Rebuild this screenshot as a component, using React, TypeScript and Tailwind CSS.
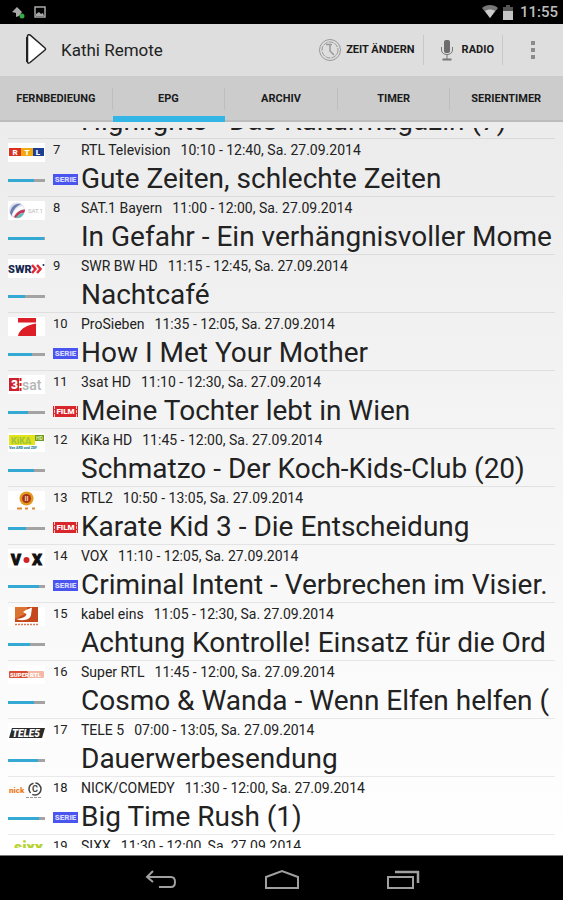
import type { ReactNode } from "react"
import { useState } from "react"

type Kind = "serie" | "film"

interface Programme {
  channel: number
  station: string
  time: string
  title: string
  progress: number
  kind?: Kind
  logo: ReactNode
}

const DATE = "Sa. 27.09.2014"

const tabs = ["FERNBEDIEUNG", "EPG", "ARCHIV", "TIMER", "SERIENTIMER"]

const programmes: Programme[] = [
  {
    channel: 6,
    station: "ZDFkultur",
    time: "11:00 - 12:00",
    title: "Highlights - Das Kulturmagazin (7)",
    progress: 80,
    logo: null,
  },
  {
    channel: 7,
    station: "RTL Television",
    time: "10:10 - 12:40",
    title: "Gute Zeiten, schlechte Zeiten",
    progress: 70,
    kind: "serie",
    logo: (
      <>
        <rect x="1" y="5" width="12" height="8" fill="#d9301f" />
        <rect x="13" y="5" width="12" height="8" fill="#f2a912" />
        <rect x="25" y="5" width="11" height="8" fill="#1b3f95" />
        <g fill="#fff" fontSize="8" fontWeight="900" textAnchor="middle">
          <text x="7" y="12">R</text>
          <text x="19" y="12">T</text>
          <text x="30" y="12">L</text>
        </g>
      </>
    ),
  },
  {
    channel: 8,
    station: "SAT.1 Bayern",
    time: "11:00 - 12:00",
    title: "In Gefahr - Ein verhängnisvoller Mome",
    progress: 96,
    logo: (
      <>
        <circle cx="9" cy="9.500" r="8" fill="#dcdfe8" />
        <path d="M2 12C3 6 7 2 13 3C9 5 5 8 4 15Z" fill="#6b7fb5" />
        <path d="M4 14C6 9 10 5 15 5L16 8C11 9 8 12 7 16Z" fill="#fbfbfd" />
        <path d="M6 16C8 12 11 9 17 8.500C17 11 16 12 15 12C12 12 10 14 8 17Z" fill="#c4385a" />
        <path d="M8 17C10 14 12 12.500 16 12C15 15 12 17.500 8 17Z" fill="#5cbdb6" />
        <text x="20" y="12" fill="#b9b9b9" fontSize="6">SAT.1</text>
      </>
    ),
  },
  {
    channel: 9,
    station: "SWR BW HD",
    time: "11:15 - 12:45",
    title: "Nachtcafé",
    progress: 46,
    logo: (
      <>
        <text x="0" y="14" fill="#16284f" fontSize="11" fontWeight="900">SWR</text>
        <path d="M24 6L27.500 10L24 14M29 6L32.500 10L29 14" fill="none" stroke="#e02b35" strokeWidth="2.500" />
        <circle cx="35.500" cy="6" r="1" fill="#16284f" />
      </>
    ),
  },
  {
    channel: 10,
    station: "ProSieben",
    time: "11:35 - 12:05",
    title: "How I Met Your Mother",
    progress: 66,
    kind: "serie",
    logo: <path d="M10 1H28V5.500H10ZM28 6.500V19H10C11 13 18 8 28 6.500Z" fill="#dc1f26" />,
  },
  {
    channel: 11,
    station: "3sat HD",
    time: "11:10 - 12:30",
    title: "Meine Tochter lebt in Wien",
    progress: 54,
    kind: "film",
    logo: (
      <>
        <rect x="1" y="3" width="10" height="13" fill="#cf1f2c" />
        <path d="M12.500 3V16" stroke="#cf1f2c" strokeWidth="2" strokeDasharray="3 2" />
        <text x="3" y="14" fill="#fff" fontSize="12" fontWeight="900">3</text>
        <text x="14" y="15" fill="#b5b5b5" fontSize="14" fontWeight="500">sat</text>
      </>
    ),
  },
  {
    channel: 12,
    station: "KiKa HD",
    time: "11:45 - 12:00",
    title: "Schmatzo - Der Koch-Kids-Club (20)",
    progress: 70,
    logo: (
      <>
        <rect x="1" y="2" width="26" height="10" fill="#e2e31a" />
        <rect x="27" y="2" width="9" height="6" fill="#6d9b2c" />
        <text x="3" y="10.500" fill="#a3c63a" fontSize="9" fontWeight="900">KiKA</text>
        <text x="28" y="7" fill="#e9ef9a" fontSize="5" fontWeight="700">HD</text>
        <text x="1" y="16" fill="#1f7f96" fontSize="3.500" fontWeight="900">Von ARD und ZDF</text>
      </>
    ),
  },
  {
    channel: 13,
    station: "RTL2",
    time: "10:50 - 13:05",
    title: "Karate Kid 3 - Die Entscheidung",
    progress: 49,
    kind: "film",
    logo: (
      <>
        <circle cx="18.500" cy="7.500" r="7" fill="#e29a1d" />
        <circle cx="18.500" cy="7.500" r="4.500" fill="#a8321d" />
        <text x="18.500" y="10" fill="#f8d9a0" fontSize="7" fontWeight="700" textAnchor="middle">II</text>
        <path d="M9 17.500H14M17 17.500H20M24 17.500H27" stroke="#d98a3a" strokeWidth="2" />
      </>
    ),
  },
  {
    channel: 14,
    station: "VOX",
    time: "11:10 - 12:05",
    title: "Criminal Intent - Verbrechen im Visier.",
    progress: 83,
    kind: "serie",
    logo: (
      <>
        <g fill="#111" stroke="#111" fontSize="15" fontWeight="900" textAnchor="middle">
          <text x="8" y="16">V</text>
          <text x="29" y="16">X</text>
        </g>
        <circle cx="18.500" cy="11" r="3" fill="#d2232a" />
      </>
    ),
  },
  {
    channel: 15,
    station: "kabel eins",
    time: "11:05 - 12:30",
    title: "Achtung Kontrolle! Einsatz für die Ord",
    progress: 60,
    logo: (
      <>
        <rect x="7" y="0" width="23" height="15" fill="#c4481c" />
        <path d="M7 0H19V6L7 12Z" fill="#db7430" />
        <path d="M18 3L24 0.500L23 8C22 13 15 14.500 8 12C14 11.500 18 10 18.500 7L15 5Z" fill="#fff" />
        <path d="M7 17.500H30" stroke="#d77a58" strokeWidth="1.500" strokeDasharray="2 1" />
      </>
    ),
  },
  {
    channel: 16,
    station: "Super RTL",
    time: "11:45 - 12:00",
    title: "Cosmo & Wanda - Wenn Elfen helfen (",
    progress: 71,
    logo: (
      <>
        <rect x="1" y="6" width="19" height="7" rx="1" fill="#dc4e33" />
        <rect x="20" y="6" width="16" height="7" rx="1" fill="#f3b8a6" />
        <g fill="#fff" fontSize="6" fontWeight="900">
          <text x="2" y="12">SUPER</text>
          <text x="22" y="12">RTL</text>
        </g>
      </>
    ),
  },
  {
    channel: 17,
    station: "TELE 5",
    time: "07:00 - 13:05",
    title: "Dauerwerbesendung",
    progress: 80,
    logo: (
      <>
        <path d="M4 5H37L34 15H1Z" fill="#2b2b2b" />
        <text x="4" y="13.500" fill="#fff" fontSize="10" fontWeight="900" fontStyle="italic">TELE5</text>
      </>
    ),
  },
  {
    channel: 18,
    station: "NICK/COMEDY",
    time: "11:30 - 12:00",
    title: "Big Time Rush (1)",
    progress: 84,
    kind: "serie",
    logo: (
      <>
        <text x="1" y="12" fill="#ee7b22" fontSize="8" fontWeight="900">nick</text>
        <circle cx="27" cy="8" r="6" fill="none" stroke="#444" strokeWidth="1.500" strokeDasharray="12 2" />
        <text x="27" y="11" fill="#444" fontSize="9" fontWeight="700" textAnchor="middle">C</text>
        <path d="M18 16.500H34" stroke="#999" strokeWidth="1" strokeDasharray="3 1" />
      </>
    ),
  },
  {
    channel: 19,
    station: "SIXX",
    time: "11:30 - 12:00",
    title: "",
    progress: 84,
    logo: <text x="6" y="14" fill="#b6d332" fontSize="16" fontWeight="900">sixx</text>,
  },
]

function KindBadge({ kind }: { kind: Kind }) {
  if (kind === "film") {
    return (
      <span className="flex h-[11px] w-[25px] items-center justify-center bg-[#d9262b] px-px">
        <span className="flex-1 border-x border-dashed border-[#f6c9c9] text-center text-[8px] leading-[11px] font-black text-white">
          FILM
        </span>
      </span>
    )
  }
  return (
    <span className="h-[11px] w-[25px] bg-[#4a55f0] text-center text-[8px] leading-[11px] font-black text-[#d5d8ff]">
      SERIE
    </span>
  )
}

function ProgrammeRow({ item }: { item: Programme }) {
  return (
    <li className="grid h-[58px] shrink-0 grid-cols-[37px_25px_minmax(0,1fr)] grid-rows-[22px_35px] gap-x-2 border-b border-black/8">
      <svg viewBox="0 0 37 19" className="mt-1 h-[19px] w-[37px] bg-white" aria-hidden="true">
        {item.logo}
      </svg>
      <span className="pt-[3px] text-[13px] leading-4">{item.channel}</span>
      <p className="-ml-[5px] flex gap-[10px] pt-[3px] text-[14px] leading-4 whitespace-nowrap">
        <span>{item.station}</span>
        <span>
          {item.time}, {DATE}
        </span>
      </p>
      <div className="flex items-center pt-1">
        <div
          role="progressbar"
          aria-valuenow={item.progress}
          aria-label={item.title || item.station}
          className="h-[3px] w-full bg-[#a3a3a3]"
        >
          <div className="h-full bg-[#33a9d3]" style={{ width: `${item.progress}%` }} />
        </div>
      </div>
      <div className="flex items-center pt-px">{item.kind && <KindBadge kind={item.kind} />}</div>
      <h2 className="-ml-[5px] overflow-hidden pt-px text-[28px] leading-[34px] whitespace-nowrap">{item.title}</h2>
    </li>
  )
}

function StatusBar() {
  return (
    <div className="flex h-6 shrink-0 items-center bg-black px-[5px] text-[#bdbdbd]">
      <svg viewBox="0 0 36 14" className="ml-[6px] h-[14px] w-9" aria-hidden="true">
        <path d="M1 7L6 2L11 7L8 11L5 12V8Z" fill="#a9a9a9" />
        <circle cx="11" cy="11" r="2.500" fill="#36a846" />
        <path d="M24 2H34V12H24Z" fill="none" stroke="#a9a9a9" strokeWidth="1.500" />
        <path d="M25 11V9L28 7L30 9L32 8L33 11Z" fill="#a9a9a9" />
      </svg>
      <svg viewBox="0 0 32 16" className="ml-auto h-4 w-8" aria-hidden="true">
        <path d="M0 4C4 0 12 0 16 4L8 14Z" fill="#777" />
        <path d="M3 7C6 5 10 5 13 7L8 14Z" fill="#ccc" />
        <path d="M24 1H28V3H31V16H21V3H24Z" fill="#555" />
        <path d="M21 7H31V16H21Z" fill="#c4c4c4" />
      </svg>
      <span className="ml-[6px] text-[15px] leading-6 font-medium">11:55</span>
    </div>
  )
}

function ActionBar() {
  return (
    <header className="flex h-[52px] shrink-0 items-center bg-[#dedede]">
      <svg viewBox="0 0 22 32" className="ml-[25px] h-8 w-[22px]" aria-hidden="true">
        <path d="M2.500 3V28Q3 30 5 28.500L20 16Q21 15 20 14L5 1Q3 0 2.500 2Z" fill="#fff" stroke="#222" strokeWidth="1.500" />
        <path d="M2 3V28" stroke="#222" strokeWidth="2" />
      </svg>
      <h1 className="ml-[14px] pt-[2px] text-[17px]">Kathi Remote</h1>
      <div className="ml-auto flex items-center text-[11px] font-bold text-[#1a1a1a]">
        <button className="flex h-[30px] items-center gap-1 border-r border-[#c8c8c8] pr-2">
          <svg viewBox="0 0 24 24" className="size-6" fill="none" stroke="#999" aria-hidden="true">
            <circle cx="12" cy="12" r="10.500" />
            <circle cx="12" cy="12" r="8" strokeDasharray="5 1" />
            <path d="M8 6.500H14M12 6.500V13L16 17" strokeWidth="1.500" />
          </svg>
          ZEIT ÄNDERN
        </button>
        <button className="flex h-[30px] items-center gap-2 border-r border-[#c8c8c8] pr-2 pl-4">
          <svg viewBox="0 0 14 22" className="h-[22px] w-[14px]" fill="none" stroke="#777" aria-hidden="true">
            <rect x="4" y="1" width="6" height="13" rx="2" fill="#6d6d6d" stroke="none" />
            <path d="M1.500 8V11C1.500 17 12.500 17 12.500 11V8M7 16V20" />
            <path d="M2.500 20.500H11.500" strokeWidth="2" />
          </svg>
          RADIO
        </button>
        <button aria-label="Mehr" className="flex w-[60px] justify-center">
          <svg viewBox="0 0 6 20" className="h-5 w-[6px]" fill="#8b8b8b" aria-hidden="true">
            <path d="M1 1H5V5H1ZM1 8H5V12H1ZM1 15H5V19H1Z" />
          </svg>
        </button>
      </div>
    </header>
  )
}

function NavBar() {
  return (
    <nav className="flex h-[45px] shrink-0 justify-center border-t border-[#777] bg-black pt-1">
      <button aria-label="Zurück" className="flex w-[121px] items-center justify-center">
        <svg viewBox="0 0 34 22" className="h-[22px] w-[34px]" fill="none" stroke="#a0a0a0" strokeWidth="2" aria-hidden="true">
          <path d="M9 2L3 8L9 13M3 8H27Q31 8 31 13Q31 18 27 18H15" />
        </svg>
      </button>
      <button aria-label="Startseite" className="flex w-[121px] items-center justify-center">
        <svg viewBox="0 0 36 22" className="h-[22px] w-9" fill="none" stroke="#a0a0a0" strokeWidth="2" aria-hidden="true">
          <path d="M2 19V8L18 2L34 8V19Z" />
        </svg>
      </button>
      <button aria-label="Letzte Apps" className="flex w-[121px] items-center justify-center">
        <svg viewBox="0 0 34 22" className="h-[22px] w-[34px]" fill="none" stroke="#a0a0a0" strokeWidth="2" aria-hidden="true">
          <path d="M2 8H27V19H2Z" />
          <path d="M9 3H32V14" strokeWidth="2.500" />
        </svg>
      </button>
    </nav>
  )
}

export default function App() {
  const [activeTab, setActiveTab] = useState("EPG")

  return (
    <div className="flex h-screen flex-col bg-white font-['Roboto',sans-serif] text-[#222]">
      <StatusBar />
      <ActionBar />
      <div role="tablist" className="grid h-[46px] shrink-0 grid-cols-5 border-b-2 border-[#bcbcbc] bg-[#cccccc]">
        {tabs.map((tab) => (
          <button
            key={tab}
            role="tab"
            aria-selected={tab === activeTab}
            onClick={() => setActiveTab(tab)}
            className={
              tab === activeTab
                ? "group -mb-[2px] flex flex-col border-b-[6px] border-[#33b5e5] pt-3"
                : "group flex flex-col pt-3"
            }
          >
            <span className="h-[22px] w-full border-r border-[#bebebe] text-center text-[11px] leading-[22px] font-bold text-[#1a1a1a] group-last:border-transparent">
              {tab}
            </span>
          </button>
        ))}
      </div>
      <main className="min-h-0 flex-1 bg-linear-to-b from-[#ececec] to-white px-2 pt-[6px] pb-[7px]">
        <div className="h-full overflow-hidden">
          {/* list is scrolled so that the first entry is almost out of view */}
          <ul className="-mt-[47px] flex flex-col">
            {programmes.map((item) => (
              <ProgrammeRow key={item.channel} item={item} />
            ))}
          </ul>
        </div>
      </main>
      <NavBar />
    </div>
  )
}
